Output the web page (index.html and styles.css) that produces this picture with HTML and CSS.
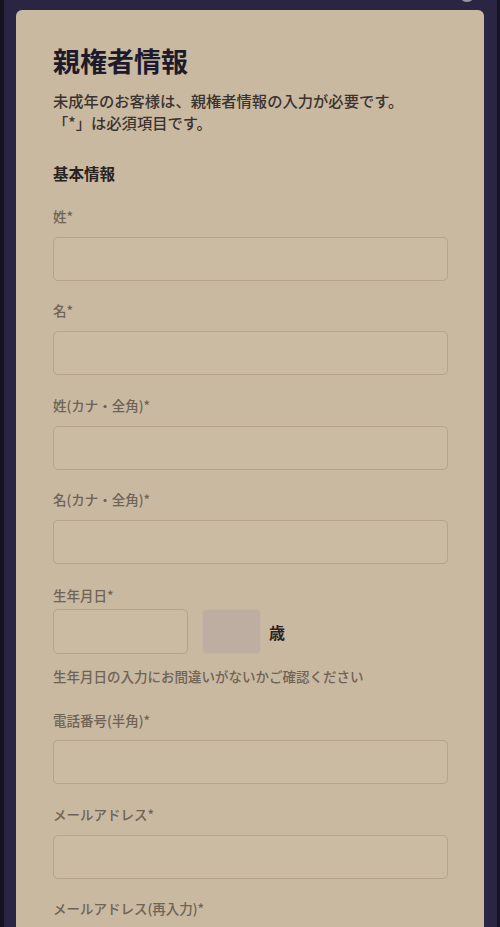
FILE: index.html
```html
<!DOCTYPE html>
<html lang="ja">
<head>
<meta charset="utf-8">
<title>親権者情報</title>
<link rel="stylesheet" href="styles.css">
</head>
<body>
<div class="frame">
  <span class="close-dot"></span>
  <div class="card">
    <h1 class="title">親権者情報</h1>
    <p class="lead">未成年のお客様は、親権者情報の入力が必要です。<br>「*」は必須項目です。</p>
    <h2 class="section">基本情報</h2>

    <div class="field first">
      <label class="label">姓*</label>
      <div class="input"></div>
    </div>
    <div class="field">
      <label class="label">名*</label>
      <div class="input"></div>
    </div>
    <div class="field">
      <label class="label">姓(カナ・全角)*</label>
      <div class="input"></div>
    </div>
    <div class="field">
      <label class="label">名(カナ・全角)*</label>
      <div class="input"></div>
    </div>
    <div class="field birth">
      <label class="label">生年月日*</label>
      <div class="birth-row">
        <div class="input date"></div>
        <div class="age"></div>
        <span class="age-unit">歳</span>
      </div>
      <p class="note">生年月日の入力にお間違いがないかご確認ください</p>
    </div>
    <div class="field phone">
      <label class="label">電話番号(半角)*</label>
      <div class="input"></div>
    </div>
    <div class="field">
      <label class="label">メールアドレス*</label>
      <div class="input"></div>
    </div>
    <div class="field">
      <label class="label">メールアドレス(再入力)*</label>
      <div class="input"></div>
    </div>
  </div>
</div>
</body>
</html>
```

FILE: styles.css
```css
* { box-sizing: border-box; }
html { background: #151320; }
body {
  margin: 0;
  font-family: "Noto Sans CJK JP", "Noto Sans", sans-serif;
  overflow: hidden;
  height: 927px;
}
.frame {
  position: relative;
  margin: 0 3px 0 4px;
  height: 927px;
  background: #2a2542;
  padding: 10px 13px 0 12px;
  overflow: hidden;
}
.close-dot {
  position: absolute;
  top: -14px;
  left: 455px;
  width: 16px;
  height: 16px;
  border-radius: 50%;
  background: #9a93a2;
}
.card {
  background: #c9b9a1;
  border-radius: 6px 6px 0 0;
  padding: 33px 36px 40px 37px;
  min-height: 930px;
}
.title {
  margin: 0;
  font-size: 27px;
  line-height: 36px;
  font-weight: 700;
  color: #1d1a2c;
}
.lead {
  margin: 10px 0 0;
  font-size: 15.3px;
  line-height: 22px;
  font-weight: 500;
  color: #3b3330;
}
.section {
  margin: 29px 0 0;
  font-size: 15.5px;
  line-height: 22px;
  font-weight: 700;
  color: #2a2220;
}
.field { margin-top: 20.4px; }
.field.first { margin-top: 23px; }
.label {
  display: block;
  font-size: 13.5px;
  line-height: 18px;
  font-weight: 500;
  color: #6f6355;
  margin-bottom: 12px;
}
.input {
  height: 44px;
  border: 1.5px solid #b5a48b;
  border-radius: 5px;
  background: #cbbba3;
}
.field.birth { margin-top: 22px; }
.field.birth .label { margin-bottom: 5px; }
.birth-row {
  display: flex;
  align-items: center;
}
.input.date {
  width: 135px;
  height: 45px;
}
.age {
  width: 59px;
  height: 45px;
  margin-left: 14px;
  border-radius: 5px;
  background: #bdaea1;
  border: 1px solid #c4b5a6;
}
.age-unit {
  margin-left: 8px;
  font-size: 16px;
  font-weight: 700;
  color: #2a2222;
  line-height: 20px;
}
.note {
  margin: 13px 0 0;
  font-size: 13.5px;
  line-height: 18px;
  font-weight: 500;
  color: #6f6355;
}
.field.phone { margin-top: 26px; }
.field.phone .label { margin-bottom: 11px; }
```
